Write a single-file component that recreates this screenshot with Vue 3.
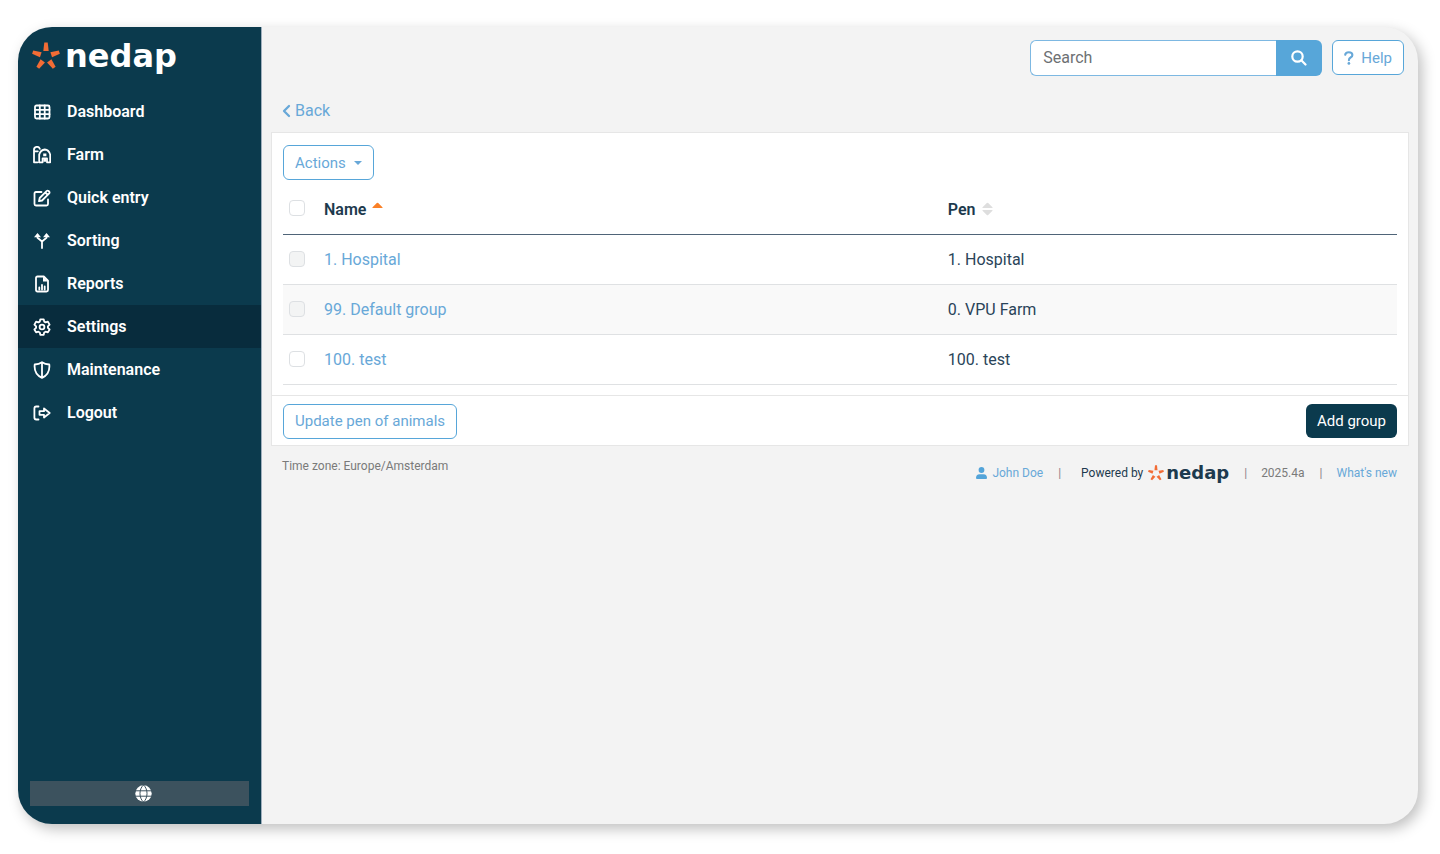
<script setup>
import { ref } from 'vue'

const query = ref('')
const petals = [0, 72, 144, 216, 288]
const nav = [
  { label: 'Dashboard', icon: 'grid' },
  { label: 'Farm', icon: 'farm' },
  { label: 'Quick entry', icon: 'edit' },
  { label: 'Sorting', icon: 'sort' },
  { label: 'Reports', icon: 'report' },
  { label: 'Settings', icon: 'gear', active: true },
  { label: 'Maintenance', icon: 'shield' },
  { label: 'Logout', icon: 'logout' },
]
const groups = ref([
  { name: '1. Hospital', pen: '1. Hospital', locked: true, checked: false },
  { name: '99. Default group', pen: '0. VPU Farm', locked: true, checked: false },
  { name: '100. test', pen: '100. test', locked: false, checked: false },
])
</script>

<template>
  <div class="page">
    <div class="window">
      <aside class="sidebar">
        <a class="brand" href="#" aria-label="nedap home">
          <svg class="star" viewBox="-14 -14.5 28 28" aria-hidden="true">
            <path v-for="a in petals" :key="a" d="M-1.7 -14H1.7L2.700 -5.500H-2.700Z" :transform="`rotate(${a})`" />
          </svg>
          <span class="wordmark">nedap</span>
        </a>
        <nav class="menu">
          <a v-for="item in nav" :key="item.label" href="#" class="item" :class="{ active: item.active }">
            <svg class="icon" viewBox="0 0 18 18" aria-hidden="true">
              <template v-if="item.icon === 'grid'">
                <rect x="2" y="2.500" width="14.500" height="13" rx="1.500" />
                <path d="M2 6.800h14.500M2 11.200h14.500M6.800 2.500v13M11.700 2.500v13" />
              </template>
              <template v-else-if="item.icon === 'farm'">
                <path d="M4.500 16.300H1V4a3 3 0 0 1 5.800-1.200M1 5.300h3.800M6.200 16.300V8.600Q7.800 3.800 11.800 3.500Q15.800 3.800 17.200 8.600V16.300H14V12.300H9.600V16.300Z" />
                <path class="solid" d="M10.200 7.500h3.200v2.800h-3.200zM10.400 12.300h2.800v3.500h-2.800z" />
              </template>
              <template v-else-if="item.icon === 'edit'">
                <path d="M8.500 3H3Q1.500 3 1.500 4.500V15Q1.500 16.500 3 16.500H13.500Q15 16.500 15 15V10.500" />
                <path d="M6 12.200L6.700 9L13.800 1.900Q14.700 1.200 15.600 2L16.200 2.600Q16.900 3.500 16.200 4.400L9.100 11.500ZM12.300 3.500L14.700 5.900" />
              </template>
              <template v-else-if="item.icon === 'sort'">
                <path d="M9 16V9.500L4.500 5.800V3.500M9 9.500L13.500 5.800V3.500" />
                <path class="solid" d="M1 5.200L4.500 1L8 5.200ZM10 5.200L13.500 1L17 5.200Z" />
              </template>
              <template v-else-if="item.icon === 'report'">
                <path d="M4.500 1.500H10.800L15 5.700V15Q15 16.500 13.500 16.500H4.500Q3 16.500 3 15V3Q3 1.500 4.500 1.500Z" />
                <path class="solid" d="M10 1.500V6.500H15Z" />
                <path d="M6.300 12.500V14.500M9 10V14.500M11.700 11.500V14.500" />
              </template>
              <template v-else-if="item.icon === 'gear'">
                <path d="M7.300 1.300h3.400l.5 2.300 1.400.8 2.300-.7 1.700 2.900-1.700 1.700v1.500l1.700 1.700-1.700 2.900-2.300-.7-1.400.8-.5 2.300H7.300l-.5-2.300-1.400-.8-2.300.7-1.700-2.900 1.700-1.700V8.300L1.400 6.600l1.700-2.900 2.300.7 1.400-.8Z" />
                <circle cx="9" cy="9" r="2.400" />
              </template>
              <template v-else-if="item.icon === 'shield'">
                <path d="M9 1.200Q12 3.300 16.300 3.500Q17.300 13 9 16.900Q.7 13 1.700 3.500Q6 3.300 9 1.200ZM9 1.500V16.500" />
              </template>
              <template v-else>
                <path d="M5.500 2.500H3.200Q1.400 2.500 1.400 4.500V13.500Q1.400 15.500 3.200 15.500H5.500" />
                <path d="M6.500 7.200H11V4.500L16.700 9L11 13.500V10.800H6.500Z" />
              </template>
            </svg>
            <span>{{ item.label }}</span>
          </a>
        </nav>
        <button class="language" type="button" aria-label="Language">
          <svg width="17" height="17" viewBox="0 0 17 17" aria-hidden="true">
            <circle cx="8.500" cy="8.500" r="8.200" fill="#fff" />
            <path d="M0 5.800H17M0 11.200H17M8.500 0C3.800 4 3.800 13 8.500 17M8.500 0C13.200 4 13.200 13 8.500 17" fill="none" stroke="#3c525e" stroke-width="1" />
          </svg>
        </button>
      </aside>

      <main class="main">
        <header class="topbar">
          <form class="search" role="search" @submit.prevent>
            <input v-model="query" type="text" placeholder="Search" aria-label="Search" />
            <button type="submit" aria-label="Submit search">
              <svg width="16" height="16" viewBox="0 0 16 16" fill="none" stroke="#fff" stroke-width="2.200" aria-hidden="true">
                <circle cx="6.500" cy="6.500" r="5.200" />
                <path d="M10.300 10.300L14.500 14.500" stroke-linecap="round" />
              </svg>
            </button>
          </form>
          <button class="outline help" type="button">
            <svg width="10" height="14" viewBox="0 0 10 14" aria-hidden="true">
              <path d="M1.200 3.800Q1.400 1.200 4.800 1.200Q8.400 1.200 8.400 4Q8.400 5.500 6.600 6.500Q4.900 7.400 4.900 9.200" fill="none" stroke="currentColor" stroke-width="2.100" stroke-linecap="round" />
              <circle cx="4.900" cy="12.400" r="1.400" fill="currentColor" />
            </svg>
            Help
          </button>
        </header>

        <a class="back" href="#">
          <svg width="9" height="14" viewBox="0 0 9 14" aria-hidden="true">
            <path d="M7 2L2 7L7 12" fill="none" stroke="currentColor" stroke-width="2.300" stroke-linecap="round" stroke-linejoin="round" />
          </svg>
          Back
        </a>

        <section class="card">
          <div class="body">
            <button class="outline actions" type="button">
              Actions
              <svg width="8" height="4" viewBox="0 0 8 4" aria-hidden="true"><path d="M0 0H8L4 4Z" fill="currentColor" /></svg>
            </button>
            <table>
              <thead>
                <tr>
                  <th class="pick"><input type="checkbox" aria-label="Select all groups" /></th>
                  <th class="name">
                    Name
                    <svg width="11" height="14" viewBox="0 0 11 14" aria-hidden="true"><path d="M1 6Q-.2 6 .8 5L4.800 1Q5.500.3 6.200 1L10.200 5Q11.200 6 10 6Z" fill="#fa8128" /></svg>
                  </th>
                  <th>
                    Pen
                    <svg width="11" height="14" viewBox="0 0 11 14" aria-hidden="true"><path d="M1 6Q-.2 6 .8 5L4.800 1Q5.500.3 6.200 1L10.200 5Q11.200 6 10 6ZM1 8Q-.2 8 .8 9L4.800 13Q5.500 13.700 6.200 13L10.200 9Q11.200 8 10 8Z" fill="#dedede" /></svg>
                  </th>
                </tr>
              </thead>
              <tbody>
                <tr v-for="g in groups" :key="g.name">
                  <td class="pick"><input v-model="g.checked" type="checkbox" :disabled="g.locked" :aria-label="`Select ${g.name}`" /></td>
                  <td><a href="#">{{ g.name }}</a></td>
                  <td>{{ g.pen }}</td>
                </tr>
              </tbody>
            </table>
          </div>
          <div class="card-foot">
            <button class="outline" type="button">Update pen of animals</button>
            <button class="solid-btn" type="button">Add group</button>
          </div>
        </section>

        <footer class="foot">
          <span>Time zone: Europe/Amsterdam</span>
          <div class="meta">
            <a class="user" href="#">
              <svg width="11" height="12" viewBox="0 0 11 12" aria-hidden="true">
                <circle cx="5.500" cy="3" r="2.900" fill="#53a4d9" />
                <path d="M0 11Q0 7.200 3.500 7.200H7.500Q11 7.200 11 11Q11 12 10 12H1Q0 12 0 11Z" fill="#53a4d9" />
              </svg>
              John Doe
            </a>
            <span class="bar">|</span>
            <span class="powered">
              Powered by
              <svg class="star" viewBox="-14 -14.5 28 28" aria-hidden="true">
                <path v-for="a in petals" :key="a" d="M-1.7 -14H1.7L2.700 -5.500H-2.700Z" :transform="`rotate(${a})`" />
              </svg>
              <b>nedap</b>
            </span>
            <span class="bar">|</span>
            <span>2025.4a</span>
            <span class="bar">|</span>
            <a href="#">What's new</a>
          </div>
        </footer>
      </main>
    </div>
  </div>
</template>

<style>
body { margin: 0; background: #fff; }
</style>

<style scoped>
* { box-sizing: border-box; }
.page {
  min-height: 100vh;
  padding: 27px 22px 30px 18px;
  display: flex;
  font: 16px/20px Roboto, sans-serif;
  color: #2a4459;
}
.window {
  flex: 1;
  display: flex;
  overflow: hidden;
  border-radius: 34px;
  background: #f3f3f3;
  box-shadow: 4px 5px 14px rgba(0, 0, 0, 0.25);
}
a { color: #68a8d8; text-decoration: none; }
button, input { font: inherit; }
button { cursor: pointer; }
.sidebar {
  width: 244px;
  flex: none;
  display: flex;
  flex-direction: column;
  background: #0b3a4d;
  border-right: 1px solid #9fafbd;
}
.brand {
  height: 63px;
  padding: 0 0 6px 14px;
  display: flex;
  align-items: center;
  gap: 5px;
}
.star { width: 28px; height: 28px; fill: #f26c35; }
.wordmark {
  font: bold 32px/32px "DejaVu Sans", sans-serif;
  color: #fff;
}
.item {
  height: 43px;
  padding-left: 15px;
  display: flex;
  align-items: center;
  gap: 16px;
  font-weight: 600;
  color: #fff;
}
.item.active { background: #082c3d; }
.icon {
  width: 18px;
  height: 18px;
  fill: none;
  stroke: #fff;
  stroke-width: 1.8;
  stroke-linecap: round;
  stroke-linejoin: round;
}
.solid { fill: #fff; stroke: none; }
.language {
  margin: auto 12px 18px;
  height: 25px;
  padding: 0 0 0 7px;
  display: flex;
  align-items: center;
  justify-content: center;
  border: 0;
  background: #3c525e;
}
.main { flex: 1; min-width: 0; padding: 0 9px; }
.topbar {
  display: flex;
  justify-content: flex-end;
  align-items: flex-start;
  gap: 10px;
  padding: 13px 5px 0 0;
}
.search { display: flex; width: 292px; height: 36px; }
.search input {
  flex: 1;
  min-width: 0;
  padding: 0 12px;
  border: 1px solid #7db8e2;
  border-right: 0;
  border-radius: 6px 0 0 6px;
  background: #fff;
  color: #2a4459;
}
.search input::placeholder { color: #6d7073; opacity: 1; }
.search button {
  width: 46px;
  padding: 0;
  display: grid;
  place-items: center;
  border: 0;
  border-radius: 0 6px 6px 0;
  background: #57a6d9;
}
.outline {
  height: 35px;
  padding: 0 11px;
  display: flex;
  align-items: center;
  border: 1px solid #57a6d9;
  border-radius: 6px;
  background: #fff;
  color: #68a8d8;
  font-size: 15px;
}
.help { gap: 7px; }
.back {
  display: flex;
  width: fit-content;
  align-items: center;
  gap: 4px;
  margin: 25px 0 0 11px;
}
.card { margin-top: 11px; background: #fff; border: 1px solid #e6e6e6; }
.body { padding: 12px 11px 10px; }
.actions { gap: 8px; }
table { width: 100%; border-collapse: collapse; table-layout: fixed; }
th, td {
  padding: 2px 6px 0;
  text-align: left;
  vertical-align: middle;
  border-bottom: 1px solid #dfe1e3;
}
th {
  height: 54px;
  padding-top: 6px;
  font-weight: 600;
  color: #1d3a4e;
  border-bottom-color: #4f6478;
}
td { height: 50px; }
tbody tr:nth-child(even) { background: #f9f9f9; }
th.pick { width: 35px; }
th.name { width: 56%; }
th svg { margin-left: 2px; vertical-align: -1px; }
.pick input {
  appearance: none;
  display: block;
  width: 16px;
  height: 16px;
  margin: 0 0 3px;
  border: 1px solid #dde0e3;
  border-radius: 4px;
  background: #fff;
}
.pick input:checked { background: #57a6d9; }
.pick input:disabled { background: #f3f4f4; }
.card-foot {
  display: flex;
  justify-content: space-between;
  align-items: flex-start;
  padding: 8px 11px 6px;
  border-top: 1px solid #e6e6e6;
}
.solid-btn {
  height: 34px;
  padding: 0 11px;
  border: 0;
  border-radius: 6px;
  background: #0b3a4d;
  color: #fff;
  font-size: 15px;
}
.foot {
  display: flex;
  justify-content: space-between;
  padding: 12px 12px 0 11px;
  font-size: 12px;
  line-height: 16px;
  color: #7a7a7a;
}
.meta { display: flex; align-items: center; padding-top: 7px; }
.user { display: flex; align-items: center; gap: 5px; }
.bar { padding: 0 14px 0 15px; color: #8d8189; }
.powered { display: flex; align-items: center; color: #1d3a4e; padding-left: 6px; }
.powered .star { width: 16px; height: 16px; margin: 0 2px 0 5px; }
.powered b { font: bold 18px/16px "DejaVu Sans", sans-serif; }
</style>
